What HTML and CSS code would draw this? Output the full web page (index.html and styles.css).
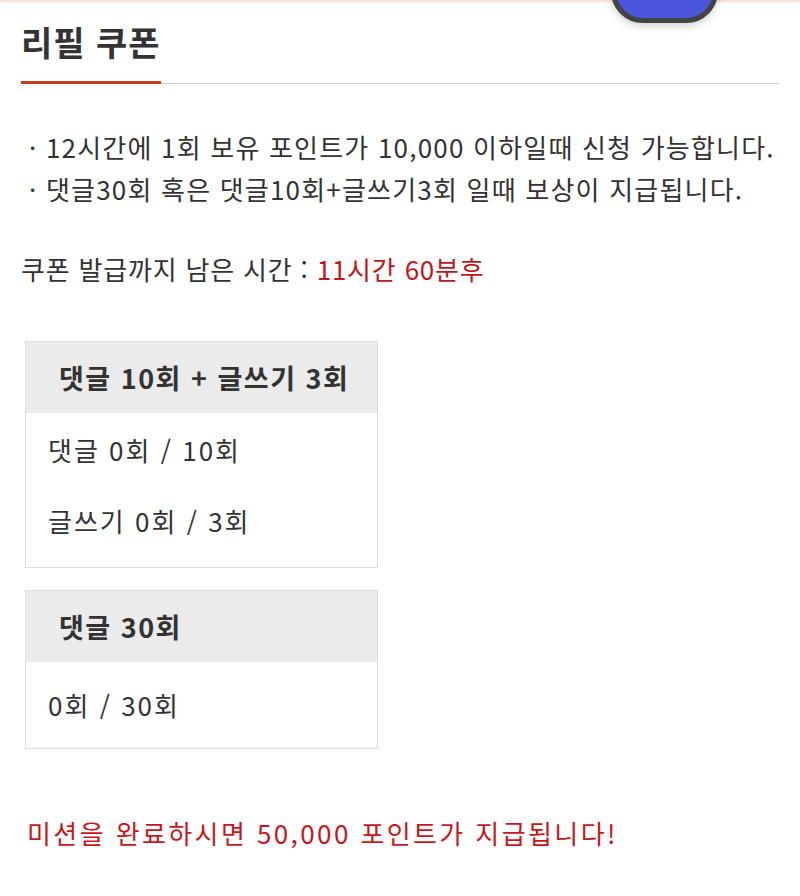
FILE: index.html
```html
<!DOCTYPE html>
<html lang="ko">
<head>
    <meta charset="UTF-8">
    <title>리필 쿠폰</title>
    <link rel="stylesheet" href="styles.css">
</head>
<body>
<div class="top-bar"></div>
<div class="float-btn"></div>
<div class="coupon-page">
    <div class="title-wrap">
        <h2 class="title">리필 쿠폰</h2>
    </div>
    <ul class="notice">
        <li>· 12시간에 1회 보유 포인트가 10,000 이하일때 신청 가능합니다.</li>
        <li>· 댓글30회 혹은 댓글10회+글쓰기3회 일때 보상이 지급됩니다.</li>
    </ul>
    <p class="remain">쿠폰 발급까지 남은 시간 : <span class="remain-time">11시간 60분후</span></p>

    <div class="mission-box">
        <div class="mission-head">댓글 10회 + 글쓰기 3회</div>
        <div class="mission-body">
            <p>댓글 0회 / 10회</p>
            <p>글쓰기 0회 / 3회</p>
        </div>
    </div>
    <div class="mission-box">
        <div class="mission-head">댓글 30회</div>
        <div class="mission-body mission-body-single">
            <p>0회 / 30회</p>
        </div>
    </div>

    <p class="reward">미션을 완료하시면 50,000 포인트가 지급됩니다!</p>
</div>
</body>
</html>
```

FILE: styles.css
```css
*{
    margin: 0;
    padding: 0;
    box-sizing: border-box;
}
body{
    background-color: #fff;
    font-family: "Noto Sans CJK KR", "Noto Sans", sans-serif;
    color: #333;
    position: relative;
}
.top-bar{
    height: 2px;
    background-color: #fde3da;
    box-shadow: 0 1px 3px rgba(240, 150, 120, 0.15);
}
.float-btn{
    position: absolute;
    left: 611px;
    top: -40px;
    width: 107px;
    height: 63px;
    background-color: #4b56dc;
    border: 5px solid #434343;
    border-radius: 0 0 32px 32px;
    box-shadow: 0 3px 8px rgba(0, 0, 0, 0.18);
}
.coupon-page{
    padding: 0 21px;
}
.title-wrap{
    border-bottom: 1px solid #cfcfcf;
}
.title{
    display: inline-block;
    padding-top: 16px;
    padding-bottom: 15px;
    margin-bottom: -1px;
    font-size: 34px;
    line-height: 48px;
    font-weight: bold;
    letter-spacing: 1px;
    color: #333;
    border-bottom: 3px solid #cc3b1b;
}
.notice{
    list-style: none;
    margin-top: 42px;
}
.notice li{
    font-size: 26px;
    line-height: 42px;
    letter-spacing: 1.2px;
    padding-left: 8px;
    white-space: nowrap;
}
.remain{
    margin-top: 38px;
    font-size: 26px;
    line-height: 42px;
    letter-spacing: 0.8px;
    white-space: nowrap;
}
.remain-time{
    color: #c1161b;
}
.mission-box{
    width: 353px;
    margin-left: 4px;
    margin-top: 22px;
    border: 1px solid #dcdcdc;
}
.remain + .mission-box{
    margin-top: 51px;
}
.mission-head{
    height: 71px;
    line-height: 71px;
    padding-left: 33px;
    background-color: #ebebeb;
    font-size: 27px;
    font-weight: bold;
    letter-spacing: 1.5px;
    color: #333;
    white-space: nowrap;
}
.mission-body{
    padding: 16px 22px 25px;
}
.mission-body p{
    font-size: 26px;
    line-height: 42px;
    letter-spacing: 2px;
}
.mission-body p + p{
    margin-top: 29px;
}
.mission-body-single{
    padding: 22px 22px 22px;
}
.reward{
    margin-top: 63px;
    margin-left: 6px;
    font-size: 26px;
    line-height: 42px;
    letter-spacing: 2.4px;
    color: #c8161d;
    white-space: nowrap;
}
```
